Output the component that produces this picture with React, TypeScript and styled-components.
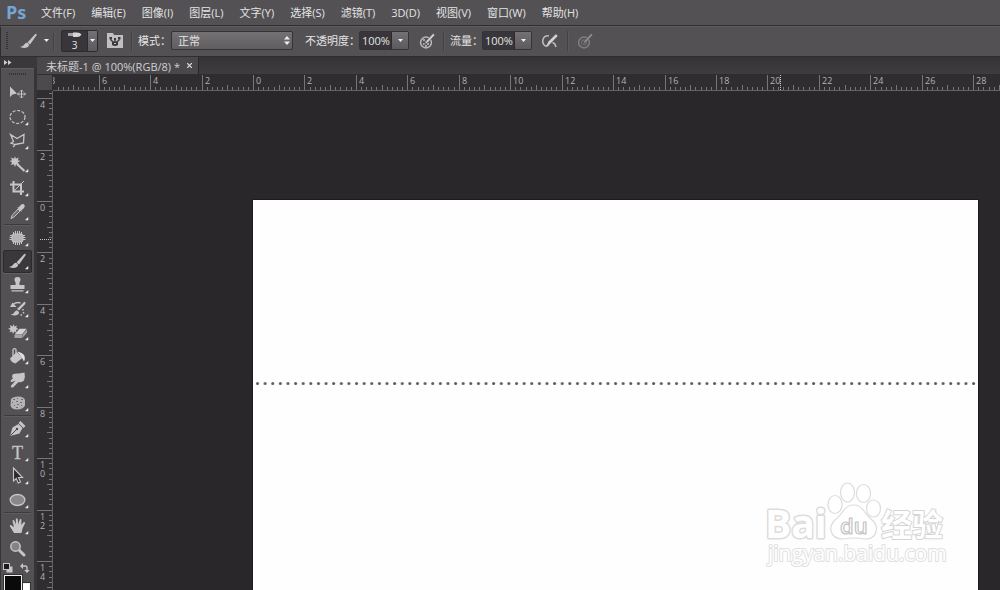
import React, { useEffect, useRef, useState } from "react";
import styled, { createGlobalStyle } from "styled-components";

const GlobalStyle = createGlobalStyle`
  *, *::before, *::after { box-sizing: border-box; }
  html, body { margin: 0; background: #29272a; }
  body, button, input, select {
    font-family: "Open Sans", "Noto Sans CJK SC", sans-serif;
    font-size: 11px;
    color: #e4e4e4;
  }
  button { cursor: default; }
`;

const colors = {
  panel: "#535154",
  edge: "#363437",
  dark: "#29272a",
  ruler: "#2f2d30",
  tick: "#777578",
  icon: "#c6c5c7",
};

const Shell = styled.div`
  display: flex;
  flex-direction: column;
  height: 100vh;
  overflow: hidden;
  background: ${colors.dark};
`;

/* ---------- menu bar ---------- */

const MenuBar = styled.nav`
  display: flex;
  align-items: center;
  flex: none;
  height: 26px;
  padding-left: 6px;
  background: ${colors.panel};
  border-bottom: 1px solid #2f2d30;
`;

const Logo = styled.span`
  width: 27px;
  height: 24px;
  font: bold 18px/22px "Open Sans", sans-serif;
  color: #76a5d4;
`;

const MenuList = styled.div`
  display: flex;
`;

const MenuButton = styled.button`
  padding: 0 8px;
  border: 0;
  background: none;
  line-height: 24px;
  white-space: nowrap;
`;

/* ---------- options bar ---------- */

const OptionsBar = styled.div`
  display: flex;
  align-items: center;
  flex: none;
  height: 31px;
  padding: 0 0 2px 5px;
  background: ${colors.panel};
  border-top: 1px solid #605e61;
  border-left: 1px solid #2f2d30;
  border-bottom: 1px solid #2f2d30;
`;

const Grip = styled.span<{ $horizontal?: boolean }>`
  flex: none;
  width: ${(p) => (p.$horizontal ? "18px" : "2px")};
  height: ${(p) => (p.$horizontal ? "2px" : "18px")};
  background: repeating-linear-gradient(
    ${(p) => (p.$horizontal ? "90deg" : "180deg")},
    #333134 0 1px,
    transparent 1px 2px
  );
`;

const Divider = styled.span<{ $before: number; $after: number }>`
  flex: none;
  width: 2px;
  height: 20px;
  margin-left: ${(p) => p.$before}px;
  margin-right: ${(p) => p.$after}px;
  background: #434144;
  border-right: 1px solid #5b595c;
`;

const IconButton = styled.button<{ $before?: number; $dim?: boolean }>`
  display: flex;
  align-items: center;
  flex: none;
  padding: 0;
  margin-left: ${(p) => p.$before ?? 0}px;
  border: 0;
  background: none;
  opacity: ${(p) => (p.$dim ? 0.45 : 1)};
`;

const PresetButton = styled.button`
  display: flex;
  flex: none;
  width: 37px;
  height: 22px;
  padding: 0;
  border: 1px solid #2c2a2d;
  border-radius: 2px;
  background: #38363a;
`;

const PresetPreview = styled.span`
  display: flex;
  flex-direction: column;
  align-items: center;
  flex: 1;
  font-size: 10px;
  line-height: 10px;
`;

const CaretBox = styled.span<{ $width: number }>`
  display: flex;
  align-items: center;
  justify-content: center;
  align-self: stretch;
  width: ${(p) => p.$width}px;
  background: linear-gradient(#737174, #5c5a5d);
  border-left: 1px solid #2c2a2d;
`;

const FieldLabel = styled.label<{ $width: number }>`
  flex: none;
  width: ${(p) => p.$width}px;
  white-space: nowrap;
  line-height: 16px;
`;

const SelectWrap = styled.span`
  position: relative;
  display: flex;
  flex: none;
  width: 122px;
  margin-right: 12px;
  svg {
    position: absolute;
    right: 3px;
    top: 5px;
    pointer-events: none;
  }
`;

const Select = styled.select`
  appearance: none;
  width: 100%;
  height: 19px;
  padding: 0 6px;
  border: 1px solid #353336;
  border-radius: 2px;
  background: linear-gradient(#737174, #5f5d60);
`;

const NumberField = styled.span`
  display: flex;
  flex: none;
  width: 50px;
  height: 19px;
  border: 1px solid #353336;
  border-radius: 2px;
  background: #38363a;
`;

const NumberInput = styled.input`
  flex: 1;
  min-width: 0;
  padding: 0 0 0 2px;
  border: 0;
  background: none;
  outline: 0;
`;

const StepButton = styled.button`
  display: flex;
  padding: 0;
  border: 0;
  background: none;
`;

/* ---------- workspace ---------- */

const Workspace = styled.div`
  display: flex;
  flex: 1;
  min-height: 0;
`;

const Toolbox = styled.aside`
  display: flex;
  flex-direction: column;
  flex: none;
  width: 37px;
  padding-left: 1px;
  background: ${colors.edge};
`;

const ToolboxHeader = styled.button`
  display: flex;
  align-items: center;
  flex: none;
  height: 11px;
  padding: 0 0 0 3px;
  border: 0;
  background: #3a383b;
`;

const ToolPanel = styled.div`
  display: flex;
  flex-direction: column;
  align-items: center;
  flex: 1;
  min-height: 0;
  width: 33px;
  padding-top: 4px;
  background: ${colors.panel};
  border-top: 1px solid #605e61;
  overflow: hidden;
`;

const ToolGroup = styled.div<{ $height: number; $gap?: number }>`
  display: flex;
  flex-direction: column;
  flex: none;
  height: ${(p) => p.$height}px;
  margin-top: ${(p) => p.$gap ?? 0}px;
`;

const ToolDivider = styled.hr`
  flex: none;
  width: 27px;
  height: 2px;
  margin: 0;
  border: 0;
  border-top: 1px solid #3d3b3e;
  border-bottom: 1px solid #5e5c5f;
`;

const ToolButton = styled.button<{ $active?: boolean }>`
  display: flex;
  align-items: center;
  justify-content: center;
  flex: 1;
  min-height: 0;
  width: 29px;
  padding: 0;
  border: 1px solid ${(p) => (p.$active ? "#2c2a2d" : "transparent")};
  border-radius: 2px;
  background: ${(p) => (p.$active ? "#3a383b" : "none")};
  box-shadow: ${(p) => (p.$active ? "0 1px 0 #626063" : "none")};
`;

const SwatchRow = styled.div`
  display: flex;
  justify-content: space-between;
  flex: none;
  width: 29px;
  height: 14px;
  padding-right: 2px;
`;

const Swatches = styled.div`
  display: grid;
  grid-template: 8px 10px 8px / 8px 10px 8px;
  align-self: flex-start;
  flex: none;
  margin-left: 3px;
`;

const Swatch = styled.button<{ $back?: boolean }>`
  grid-area: ${(p) => (p.$back ? "2 / 2 / 4 / 4" : "1 / 1 / 3 / 3")};
  z-index: ${(p) => (p.$back ? 0 : 1)};
  padding: 0;
  border: 1px solid #f2f2f2;
  outline: 1px solid #353336;
  background: ${(p) => (p.$back ? "#ffffff" : "#0b0a0b")};
`;

const Main = styled.main`
  display: flex;
  flex-direction: column;
  flex: 1;
  min-width: 0;
`;

const TabBar = styled.div`
  display: flex;
  flex: none;
  height: 17px;
  background: linear-gradient(#353336, #3e3c3f);
`;

const Tab = styled.div`
  display: flex;
  align-items: center;
  gap: 5px;
  padding: 0 4px 0 9px;
  background: #4a484b;
  border-right: 1px solid #29272a;
  white-space: nowrap;
  color: #d0cfd1;
`;

const CloseButton = styled.button`
  display: flex;
  padding: 2px;
  border: 0;
  background: none;
`;

const Surface = styled.div`
  display: grid;
  grid-template: 17px minmax(0, 1fr) / 16px minmax(0, 1fr);
  flex: 1;
  min-height: 0;
`;

const Corner = styled.div`
  background: #4c4a4d;
  border: solid #2f2d30;
  border-width: 1px 1px 1px 0;
`;

const RulerStrip = styled.div<{ $vertical?: boolean }>`
  overflow: hidden;
  background: ${colors.ruler};
  border: 0 solid #646265;
  border-width: ${(p) => (p.$vertical ? "0 1px 0 0" : "0 0 1px 0")};
  svg {
    display: block;
    width: 100%;
    height: 100%;
    font-family: "Open Sans", sans-serif;
    font-size: 9px;
    fill: #b2b1b3;
  }
`;

const Stage = styled.div`
  position: relative;
  display: flex;
  padding: 109px 22px 0 200px;
  background: ${colors.dark};
`;

const Page = styled.div`
  flex: 1;
  min-width: 0;
  padding-top: 181px;
  background: #fefefe;
  box-shadow: 0 0 0 1px #1d1b1e;
  svg {
    display: block;
    width: 100%;
  }
`;

const Watermark = styled.div`
  position: absolute;
  right: 50px;
  bottom: 16px;
  svg {
    display: block;
  }
`;

/* ---------- drawings ---------- */

const Caret = () => (
  <svg width="5" height="3" viewBox="0 0 5 3" aria-hidden="true">
    <path d="M0 0H5L2.500 3Z" fill="#f0f0f0" />
  </svg>
);

const BrushShape = () => (
  <>
    <path d="M7.500 10.500 15 2.200Q17.200 1 16.400 3.400L10 12.400Z" fill={colors.icon} />
    <path d="M0 15Q3.500 14.500 4.500 12.200Q6 9.800 8 11.200Q10 13 8.500 14.500Q6 17 0 15Z" fill={colors.icon} />
  </>
);

const OptionBrush = () => (
  <svg width="17" height="17" viewBox="0 0 17 17" aria-hidden="true">
    <BrushShape />
  </svg>
);

const BrushTip = () => (
  <svg width="14" height="9" viewBox="0 0 14 9" aria-hidden="true">
    <path d="M0 2H5V5H0Z" fill="#a3a2a4" />
    <path d="M5 1.500H9Q12 1.500 13.500 3.500Q12 6 9 6H5Z" fill="#d6d5d7" />
  </svg>
);

const BrushPanelIcon = () => (
  <svg width="16" height="15" viewBox="0 0 16 15" aria-hidden="true">
    <path d="M0 0H6L7 2H16V15H0Z" fill="#c0bfc1" />
    <path d="M2.500 4H5V6.500H2.500ZM7 5H9V7H7ZM11 4H13.500V6.500H11Z" fill="#3b393c" />
    <path d="M3.500 6.500 7 10M8 6.500V10M12.500 6.500 9 10" stroke="#3b393c" strokeWidth="1.300" />
    <path d="M5 8.500H11V12Q8 14 5 12Z" fill="#3b393c" />
    <path d="M7 10h2v1H7z" fill="#c0bfc1" />
  </svg>
);

const PressureIcon = ({ checker }: { checker?: boolean }) => (
  <svg width="16" height="16" viewBox="0 0 16 16" aria-hidden="true">
    <circle cx="7" cy="9.500" r="5.400" fill="none" stroke="#b9b8ba" strokeWidth="1.500" />
    {checker ? (
      <path d="M4 6h2v2H4zM6 8h2v2H6zM4 10h2v2H4zM8 10h2v2H8zM6 12h2v2H6z" fill="#aaa9ab" />
    ) : (
      <circle cx="7" cy="9.500" r="2.600" fill="none" stroke="#aaa9ab" />
    )}
    <path d="M5.500 11.500 7.500 7.500 14 .5Q16 .5 15.500 2.500L9 9.500Z" fill="#d2d1d3" stroke="#535154" strokeWidth=".6" />
  </svg>
);

const AirbrushIcon = () => (
  <svg width="18" height="14" viewBox="0 0 18 14" aria-hidden="true">
    <path d="M8 1.800Q3 1.500 2 5.500Q1 10 4.500 12Q7 12.500 8 10" fill="none" stroke="#b9b8ba" strokeWidth="1.600" />
    <path d="M5 12.500 7.500 7.500 14.500 .5Q17 .2 16.200 2.500L9.500 9.500Z" fill="#d2d1d3" />
    <path d="M11.500 8.500Q14 9 15 13" fill="none" stroke="#b9b8ba" strokeWidth="1.600" />
  </svg>
);

const g = colors.icon;

const toolArt: Record<string, React.ReactNode> = {
  move: (
    <>
      <path d="M7 5.500V16L9.500 13.500L14 12.500Z" fill={g} />
      <path d="M18.500 9V17M14.500 13H22.500M17 10.500 18.500 9 20 10.500M17 15.500 18.500 17 20 15.500M16 11.500 14.500 13 16 14.500M21 11.500 22.500 13 21 14.500" fill="none" stroke={g} />
    </>
  ),
  marquee: <ellipse cx="14.500" cy="12" rx="7.500" ry="6.500" fill="none" stroke={g} strokeWidth="1.200" strokeDasharray="3 1.600" />,
  lasso: <path d="M7.500 5.500 14 9.500 21 5.500 20.500 14 12 15.500 8 14 10.500 12.500ZM12 15.500Q11.500 17 10 18" fill="none" stroke={g} strokeWidth="1.300" />,
  wand: (
    <>
      <path d="M12 4.300 12.900 6.800 15.700 5.600 14.800 8.200 17.500 9 14.800 10.200 16 13 13.100 12.200 12 15 10.900 12.200 8 13 9 10.200 6.500 9 9 8.200 8 5.600 10.900 6.800Z" fill={g} />
      <path d="M14 12 21.500 19" stroke={g} strokeWidth="2.200" />
    </>
  ),
  crop: (
    <>
      <path d="M10.500 5V15.500H21M7 8.500H18V19" fill="none" stroke={g} strokeWidth="2" />
      <path d="M11 15 21 5" stroke={g} />
    </>
  ),
  eyedropper: (
    <>
      <path d="M8 18.500 9 15.500 15 9 17 11 11 17Z" fill="#6f6d70" stroke={g} />
      <path d="M14 7.500 15.500 7.500 18 4.700Q20.300 3.200 21.500 5Q22.500 6.700 20.500 8.500L18.300 10.500 18.500 12Z" fill={g} />
    </>
  ),
  patch: (
    <>
      <rect x="9" y="8" width="11" height="8" rx="2" fill="#b4b3b5" stroke={g} />
      <path d="M10.500 6V8M12.500 5V8M14.500 5V8M16.500 5V8M18.500 6V8M10.500 16V18M12.500 16V19M14.500 16V19M16.500 16V19M18.500 16V18M7 9.500H9M6.500 11.500H9M6.500 13.500H9M20 9.500H22M20 11.500H22.500M20 13.500H22.500" stroke={g} />
    </>
  ),
  brush: (
    <g transform="translate(6 3)">
      <BrushShape />
    </g>
  ),
  stamp: (
    <path d="M14.500 4Q17.800 4 17.500 7.200Q16 9.500 16.500 12H21.500V16H7.500V12H12.500Q13 9.500 11.500 7.200Q11.200 4 14.500 4ZM8.500 17.200H20.500V18.500H8.500Z" fill={g} />
  ),
  history: (
    <>
      <path d="M14 12 21 5Q23 4.200 22.300 7L16 13.500ZM7.500 17.500Q11 17 12 14.500Q13.500 12.500 15.300 14.200Q17 16 15 17.500Q12 19.500 7.500 17.500Z" fill={g} />
      <path d="M9.500 8Q13 4.500 17.500 6M20 12V13.500M20.500 15V16.500M19 18H17.500" fill="none" stroke={g} strokeWidth="1.500" />
      <path d="M7 10 9.500 5.500 13.500 10Z" fill={g} />
    </>
  ),
  eraser: (
    <>
      <path d="M10.500 4 11.300 6.500 14 5.500 13.200 7.800 15.500 9 13 10 13.500 12.700 11.200 11.500 10 14 9 11.500 6.500 12.500 7.500 10 5 8.800 7.500 7.800 7 5 9.500 6.400Z" fill={g} />
      <path d="M11.500 14.500 16.500 8.800H23.500L19 14.500Z" fill="#d2d1d3" />
      <path d="M11.500 15H19V18H11.500ZM19.500 14.800 24 9.300V12.500L19.500 18Z" fill="#a5a4a6" />
    </>
  ),
  bucket: (
    <>
      <path d="M7 14.500 13.500 8 20 13.500 12.500 19.500Q8 18.500 7 14.500Z" fill={g} />
      <path d="M10 12V6Q11 3.500 13 5.500V10" fill="none" stroke={g} strokeWidth="1.300" />
      <path d="M14 7.500Q20 8.500 21.500 12Q22.500 15 21 17.500Q19.500 15 18.500 12.500Z" fill="#e2e1e3" />
    </>
  ),
  smudge: (
    <path d="M9.500 6.500Q12 5 16 5.500L21.500 4.500Q22.500 9 21 12.500Q18.500 15 15.500 14L10 19.500Q7.500 19.800 7.800 18L12.500 12.500 9 14Q7 14 8 12L10 10.500Q8.500 8.500 9.500 6.500Z" fill={g} />
  ),
  sponge: (
    <>
      <path d="M8 8Q10 5.500 15 5.500Q21 5.500 22 9V14.500Q20 18.500 14 18.500Q8.500 18.500 7.500 14.500Z" fill="#b4b3b5" />
      <path d="M10 8.500h2M14 7.500h1M18 8.500h2M9 11.500h1M13 10.500h2M17 11.500h2M11 14.500h1M14 13.500h2M18 14.500h1M13 16.500h2" stroke="#6d6b6e" />
    </>
  ),
  pen: (
    <>
      <path d="M7 19 9.500 10.500 15.500 7 19.500 11 16.500 16.500Z" fill={g} />
      <path d="M15.500 6 17.500 4 22.500 9 20.500 11Z" fill={g} />
      <path d="M7.500 18.500 13.500 12.500" stroke="#454346" />
      <circle cx="14" cy="12" r="1.200" fill="#454346" />
    </>
  ),
  path: (
    <path d="M10.500 4V17L13.300 14.500 15.200 19 17.500 18 15.500 13.500H19.500Z" fill="#2c2a2d" stroke={g} strokeWidth="1.100" />
  ),
  ellipse: <ellipse cx="14.500" cy="12" rx="7.300" ry="5.500" fill="#89878a" stroke={g} strokeWidth="1.300" />,
  hand: (
    <path d="M11 19 7 12.500Q6.500 10.500 8.300 11.300L11 13.300 9.500 7Q10 5.300 11.200 6.500L13 10.500 12.800 5Q13.700 3.500 14.700 5L15.300 10.300 16.800 5.300Q18 4.300 18.500 5.700L18.200 11 20.800 8Q22.300 7.500 22 9.200L19.500 14.500 18.500 19Z" fill={g} />
  ),
  zoom: (
    <>
      <circle cx="12.500" cy="9.500" r="4.700" fill="#858386" stroke={g} strokeWidth="1.500" />
      <path d="M16.500 13.500 21 18" stroke={g} strokeWidth="3" strokeLinecap="round" />
    </>
  ),
  type: (
    <text x="14.500" y="18" textAnchor="middle" fontFamily="Liberation Serif, serif" fontSize="18" fill={g} stroke={g} strokeWidth=".3">
      T
    </text>
  ),
};

type Tool = { id: string; label: string; single?: boolean };

const toolGroups: { height: number; gap?: number; tools: Tool[] }[] = [
  {
    height: 143,
    gap: 6,
    tools: [
      { id: "move", label: "移动工具", single: true },
      { id: "marquee", label: "椭圆选框工具" },
      { id: "lasso", label: "多边形套索工具" },
      { id: "wand", label: "魔棒工具" },
      { id: "crop", label: "裁剪工具" },
      { id: "eyedropper", label: "吸管工具" },
    ],
  },
  {
    height: 189,
    tools: [
      { id: "patch", label: "修补工具" },
      { id: "brush", label: "画笔工具" },
      { id: "stamp", label: "仿制图章工具" },
      { id: "history", label: "历史记录画笔工具" },
      { id: "eraser", label: "魔术橡皮擦工具" },
      { id: "bucket", label: "油漆桶工具" },
      { id: "smudge", label: "涂抹工具" },
      { id: "sponge", label: "海绵工具" },
    ],
  },
  {
    height: 95,
    tools: [
      { id: "pen", label: "钢笔工具" },
      { id: "type", label: "文字工具" },
      { id: "path", label: "路径选择工具" },
      { id: "ellipse", label: "椭圆工具" },
    ],
  },
  {
    height: 47,
    tools: [
      { id: "hand", label: "抓手工具" },
      { id: "zoom", label: "缩放工具", single: true },
    ],
  },
];

const ToolIcon = ({ tool }: { tool: Tool }) => (
  <svg width="27" height="22" viewBox="1 1 27 22" aria-hidden="true">
    {toolArt[tool.id]}
    {!tool.single && <path d="M25 17.500V20H22.500Z" fill="#f0f0f0" stroke="#f0f0f0" strokeWidth=".5" />}
  </svg>
);

/* Rulers: 257 px cover 10 cm, labelled every 2 cm and divided in 2 mm steps. */
const STEP = 5.144;
const H_ORIGIN = 200;
const V_ORIGIN = 110;

const steps = (from: number, length: number, origin: number) =>
  Array.from({ length: Math.max(0, Math.floor((length - origin) / STEP) - from + 1) }, (_, i) => from + i);
const tickLength = (n: number) => (n % 10 === 0 ? 15 : n % 5 === 0 ? 5 : 3);

/* Keeps the ruler's ticks in step with the size of its strip. */
const useStripSize = () => {
  const ref = useRef<HTMLDivElement>(null);
  const [size, setSize] = useState({ width: 0, height: 0 });
  useEffect(() => {
    const strip = ref.current;
    if (!strip) return;
    const measure = () => setSize({ width: strip.clientWidth, height: strip.clientHeight });
    measure();
    const observer = new ResizeObserver(measure);
    observer.observe(strip);
    return () => observer.disconnect();
  }, []);
  return { ref, size };
};

const HorizontalRuler = () => {
  const { ref, size } = useStripSize();
  return (
    <RulerStrip ref={ref}>
      <svg aria-hidden="true">
        {steps(-40, size.width, H_ORIGIN).map((n) => {
          const x = Math.round(H_ORIGIN + n * STEP);
          return (
            <g key={n}>
              <rect x={x} y={16 - tickLength(n)} width="1" height={tickLength(n)} fill={colors.tick} />
              {n % 10 === 0 && (
                <text x={x + 3} y="10">
                  {Math.abs(n / 5)}
                </text>
              )}
            </g>
          );
        })}
        <path d="M727.500 1V16" stroke="#c8c7c9" strokeDasharray="1 1" />
      </svg>
    </RulerStrip>
  );
};

const VerticalRuler = () => {
  const { ref, size } = useStripSize();
  return (
    <RulerStrip $vertical ref={ref}>
      <svg aria-hidden="true">
        {steps(-21, size.height, V_ORIGIN).map((n) => {
          const y = Math.round(V_ORIGIN + n * STEP);
          return (
            <g key={n}>
              <rect x={15 - tickLength(n)} y={y} width={tickLength(n)} height="1" fill={colors.tick} />
              {n % 10 === 0 &&
                String(Math.abs(n / 5))
                  .split("")
                  .map((digit, i) => (
                    <text key={i} x="3" y={y + 10 + i * 9}>
                      {digit}
                    </text>
                  ))}
            </g>
          );
        })}
        <path d="M3 148.500H15" stroke="#c8c7c9" strokeDasharray="1 1" />
      </svg>
    </RulerStrip>
  );
};

const WatermarkArt = () => (
  <svg width="184" height="92" viewBox="0 0 184 92" role="img" aria-label="Baidu 经验">
    <g fill="#ffffff" stroke="#dcdcdc" strokeWidth="1.200" strokeLinejoin="round">
      <ellipse cx="69" cy="22.500" rx="7" ry="9" />
      <ellipse cx="81.500" cy="10.500" rx="7" ry="9.500" />
      <ellipse cx="97.500" cy="11.500" rx="7" ry="9" />
      <ellipse cx="107.500" cy="26.500" rx="7" ry="8.500" />
      <path d="M88 23Q94 23 98 29Q101 34 106 38Q112 43 110 50Q108 57 99 57Q88 55 77 57Q67 57 65 49Q64 43 69 38Q74 34 78 28Q82 23 88 23Z" />
      <g fontFamily="Open Sans, sans-serif">
        <text x="-1" y="56" fontSize="39" fontWeight="bold" strokeWidth="3" paintOrder="stroke">
          Bai
        </text>
        <text x="74" y="52" fontSize="22" fontWeight="600" stroke="#c4c4c4">
          du
        </text>
        <text x="2" y="79" fontSize="21" strokeWidth="2" stroke="#e0e0e0" paintOrder="stroke">
          jingyan.baidu.com
        </text>
      </g>
      <text x="115" y="54" fontFamily="Noto Sans CJK SC, sans-serif" fontSize="31" fontWeight="bold" strokeWidth="2" stroke="#d4d4d4" paintOrder="stroke">
        经验
      </text>
    </g>
  </svg>
);

const menus = ["文件(F)", "编辑(E)", "图像(I)", "图层(L)", "文字(Y)", "选择(S)", "滤镜(T)", "3D(D)", "视图(V)", "窗口(W)", "帮助(H)"];

const Percent = ({ id }: { id: string }) => (
  <NumberField>
    <NumberInput id={id} defaultValue="100%" />
    <StepButton aria-label="调整数值">
      <CaretBox $width={17}>
        <Caret />
      </CaretBox>
    </StepButton>
  </NumberField>
);

export default function App() {
  return (
    <Shell>
      <GlobalStyle />
      <MenuBar>
        <Logo>Ps</Logo>
        <MenuList>
          {menus.map((name) => (
            <MenuButton key={name}>{name}</MenuButton>
          ))}
        </MenuList>
      </MenuBar>

      <OptionsBar>
        <Grip />
        <IconButton $before={12} aria-label="画笔工具">
          <OptionBrush />
        </IconButton>
        <IconButton $before={7} aria-label="工具预设">
          <Caret />
        </IconButton>
        <Divider $before={4} $after={6} />
        <PresetButton aria-label="画笔预设 3">
          <PresetPreview>
            <BrushTip />
            <span>3</span>
          </PresetPreview>
          <CaretBox $width={10}>
            <Caret />
          </CaretBox>
        </PresetButton>
        <IconButton $before={9} aria-label="切换画笔面板">
          <BrushPanelIcon />
        </IconButton>
        <Divider $before={8} $after={5} />
        <FieldLabel htmlFor="mode" $width={33}>模式：</FieldLabel>
        <SelectWrap>
          <Select id="mode" defaultValue="正常">
            <option>正常</option>
          </Select>
          <svg width="6" height="9" viewBox="0 0 6 9" aria-hidden="true">
            <path d="M0 3.500H6L3 0ZM0 5.500H6L3 9Z" fill="#eeeeee" />
          </svg>
        </SelectWrap>
        <FieldLabel htmlFor="opacity" $width={54}>不透明度：</FieldLabel>
        <Percent id="opacity" />
        <IconButton $before={10} aria-label="不透明度压力">
          <PressureIcon checker />
        </IconButton>
        <Divider $before={8} $after={5} />
        <FieldLabel htmlFor="flow" $width={32}>流量：</FieldLabel>
        <Percent id="flow" />
        <IconButton $before={9} aria-label="喷枪">
          <AirbrushIcon />
        </IconButton>
        <Divider $before={8} $after={8} />
        <IconButton $dim aria-label="大小压力">
          <PressureIcon />
        </IconButton>
      </OptionsBar>

      <Workspace>
        <Toolbox>
          <ToolboxHeader aria-label="展开面板">
            <svg width="8" height="5" viewBox="0 0 8 5" aria-hidden="true">
              <path d="M0 0 3.500 2.500 0 5ZM4 0 7.500 2.500 4 5Z" fill="#d0cfd1" />
            </svg>
          </ToolboxHeader>
          <ToolPanel>
            <Grip $horizontal />
            {toolGroups.map((group, i) => (
              <React.Fragment key={group.height}>
                {i > 0 && <ToolDivider />}
                <ToolGroup $height={group.height} $gap={group.gap}>
                  {group.tools.map((tool) => (
                    <ToolButton key={tool.id} $active={tool.id === "brush"} aria-label={tool.label}>
                      <ToolIcon tool={tool} />
                    </ToolButton>
                  ))}
                </ToolGroup>
              </React.Fragment>
            ))}
            <SwatchRow>
              <IconButton aria-label="默认前景色和背景色">
                <svg width="10" height="10" viewBox="0 0 10 10" aria-hidden="true">
                  <rect x="3.500" y="3.500" width="6" height="6" fill="#c6c5c7" />
                  <rect x=".5" y=".5" width="6" height="6" fill="#1b1a1c" stroke="#c6c5c7" />
                </svg>
              </IconButton>
              <IconButton aria-label="切换前景色和背景色">
                <svg width="10" height="10" viewBox="0 0 10 10" aria-hidden="true">
                  <path d="M2 3H5.500Q7 3 7 4.500V8" fill="none" stroke="#c6c5c7" strokeWidth="1.300" />
                  <path d="M0 3 3 0V6ZM4.200 7H9.800L7 10Z" fill="#c6c5c7" />
                </svg>
              </IconButton>
            </SwatchRow>
            <Swatches>
              <Swatch aria-label="前景色" />
              <Swatch $back aria-label="背景色" />
            </Swatches>
          </ToolPanel>
        </Toolbox>

        <Main>
          <TabBar>
            <Tab>
              <span>未标题-1 @ 100%(RGB/8) *</span>
              <CloseButton aria-label="关闭">
                <svg width="5" height="5" viewBox="0 0 5 5" aria-hidden="true">
                  <path d="M0 0 5 5M5 0 0 5" stroke="#dddddd" strokeWidth="1.200" />
                </svg>
              </CloseButton>
            </Tab>
          </TabBar>
          <Surface>
            <Corner />
            <HorizontalRuler />
            <VerticalRuler />
            <Stage>
              <Page>
                <svg height="5" aria-hidden="true">
                  <defs>
                    <pattern id="dots" x="2" width="7.618" height="5" patternUnits="userSpaceOnUse">
                      <circle cx="2.500" cy="2.500" r="1.500" fill="#5b595c" />
                    </pattern>
                  </defs>
                  <rect x="2" width="100%" height="5" fill="url(#dots)" />
                </svg>
              </Page>
              <Watermark>
                <WatermarkArt />
              </Watermark>
            </Stage>
          </Surface>
        </Main>
      </Workspace>
    </Shell>
  );
}
